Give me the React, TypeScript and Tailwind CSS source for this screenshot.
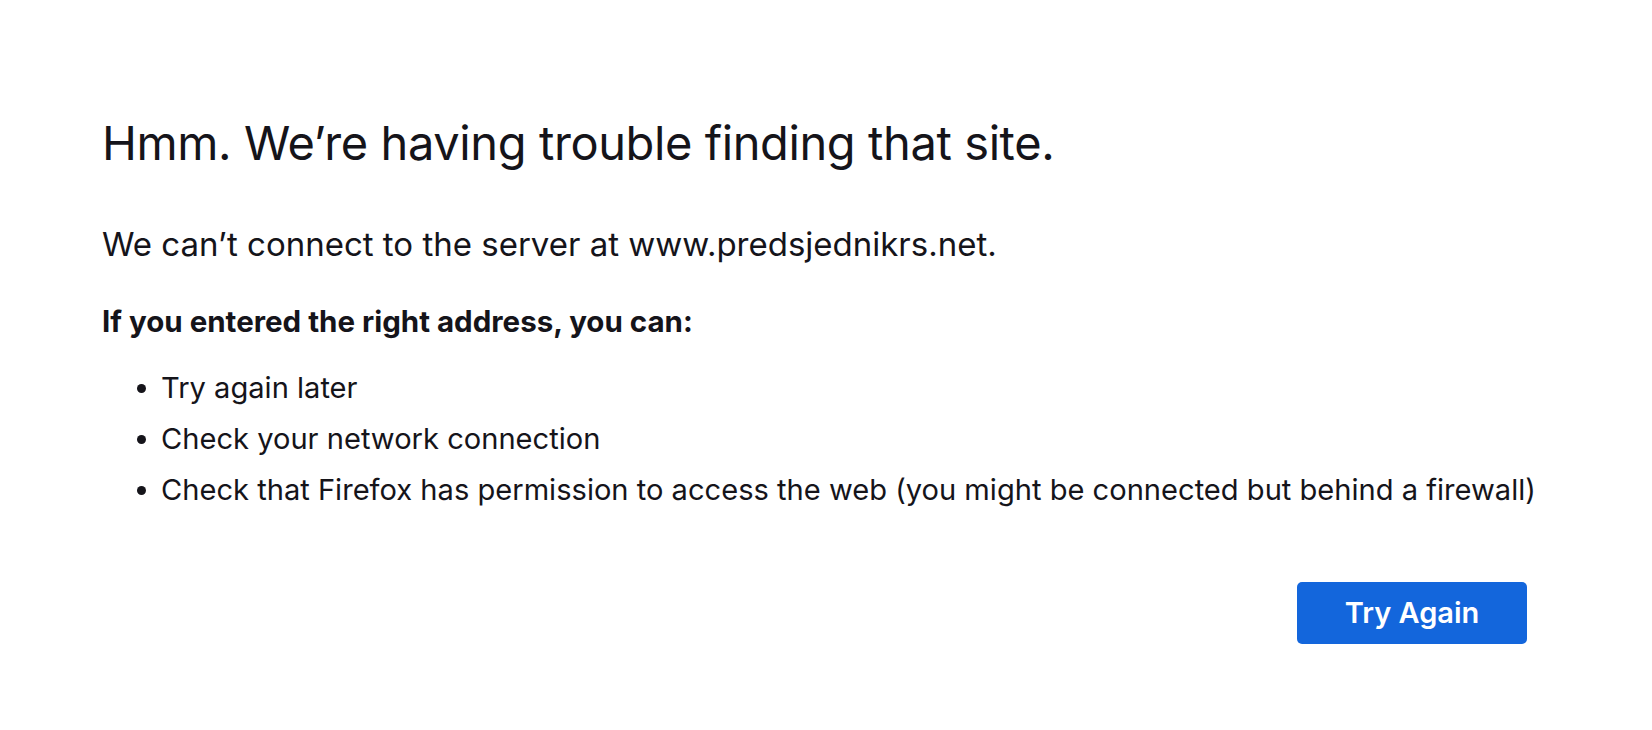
import React from "react";

export default function App() {
  const items = [
    "Try again later",
    "Check your network connection",
    "Check that Firefox has permission to access the web (you might be connected but behind a firewall)",
  ];
  return (
    <div
      className="w-[1652px] h-[730px] bg-white text-[#15141a] overflow-hidden"
      style={{ fontFamily: "Inter, 'Noto Sans', sans-serif" }}
    >
      <div className="ml-[102px] w-[1425px] pt-[113px] flex flex-col">
        <h1 className="text-[47px] leading-[60px] font-normal tracking-[-0.4px] whitespace-nowrap">
          Hmm. We’re having trouble finding that site.
        </h1>
        <p className="mt-[53px] text-[33px] leading-[36px] whitespace-nowrap">
          We can’t connect to the server at www.predsjednikrs.net.
        </p>
        <p className="mt-[42px] text-[29.5px] leading-[34px] font-bold whitespace-nowrap">
          If you entered the right address, you can:
        </p>
        <ul className="mt-[32px] flex flex-col gap-[15px]">
          {items.map((t) => (
            <li key={t} className="flex items-center text-[29.1px] leading-[36px] whitespace-nowrap">
              <span className="ml-[35px] mr-[15px] w-[9px] h-[9px] rounded-full bg-[#15141a] shrink-0" />
              <span>{t}</span>
            </li>
          ))}
        </ul>
        <div className="mt-[74px] flex justify-end">
          <button className="w-[230px] h-[62px] rounded-[5px] bg-[#1366dc] text-white text-[29px] font-semibold">
            Try Again
          </button>
        </div>
      </div>
    </div>
  );
}
